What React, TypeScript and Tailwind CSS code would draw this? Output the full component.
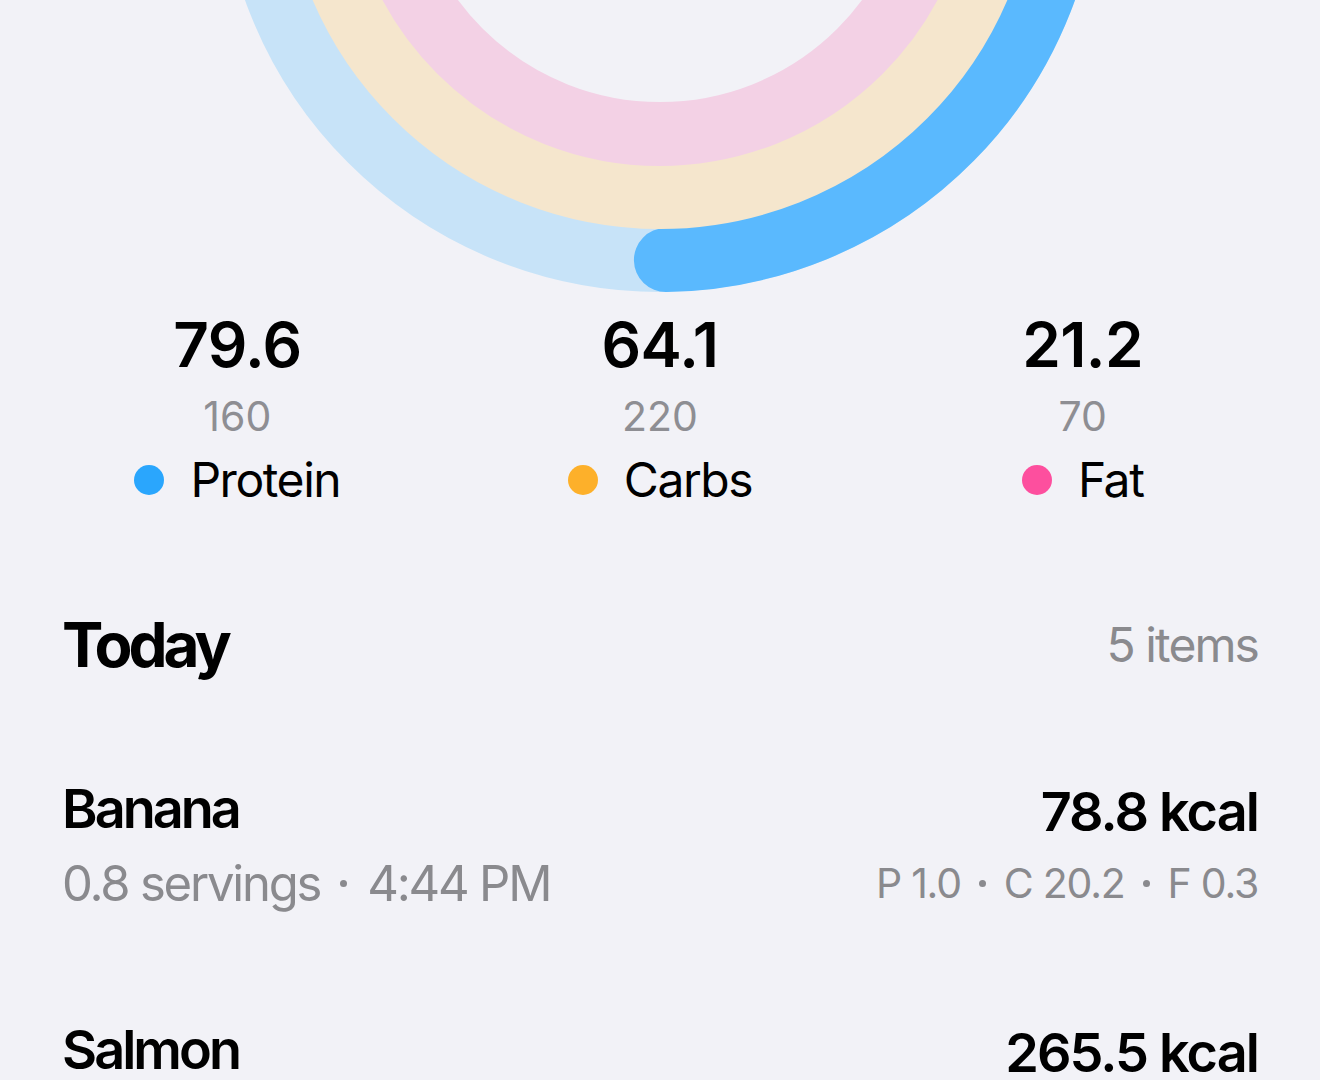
import React from "react";

const CX = 660;
const CY = -149;

const rings = [
  { r: 409, track: "#C7E3F8", fill: "#5AB9FE", value: 79.6, goal: 160 },
  { r: 346, track: "#F5E6CD", fill: "#FDB02A", value: 64.1, goal: 220 },
  { r: 283, track: "#F3D1E5", fill: "#FD4F9E", value: 21.2, goal: 70 },
];

const macros = [
  { value: "79.6", goal: "160", label: "Protein", dot: "bg-[#2AA6FD]" },
  { value: "64.1", goal: "220", label: "Carbs", dot: "bg-[#FDB02A]" },
  { value: "21.2", goal: "70", label: "Fat", dot: "bg-[#FD4F9E]" },
];

const foods = [
  { name: "Banana", meta: ["0.8 servings", "4:44 PM"], kcal: "78.8 kcal", macros: ["P 1.0", "C 20.2", "F 0.3"] },
  { name: "Salmon", meta: ["1 serving", "12:30 PM"], kcal: "265.5 kcal", macros: ["P 25.4", "C 0.0", "F 17.2"] },
];

const Rings = () => {
  return (
    <svg width="1320" height="300" viewBox="0 0 1320 300" className="block">
      {rings.map((ring) => {
        const c = 2 * Math.PI * ring.r;
        const frac = Math.min(ring.value / ring.goal, 1);
        return (
          <g key={ring.r}>
            <circle cx={CX} cy={CY} r={ring.r} fill="none" stroke={ring.track} strokeWidth={64} />
            <circle
              cx={CX}
              cy={CY}
              r={ring.r}
              fill="none"
              stroke={ring.fill}
              strokeWidth={64}
              strokeLinecap="round"
              strokeDasharray={`${frac * c} ${c}`}
              transform={`rotate(-90 ${CX} ${CY})`}
            />
          </g>
        );
      })}
    </svg>
  );
};

// parts joined by a small middle dot, like "a • b • c"
const Joined = ({ parts, gap }: { parts: string[]; gap: string }) => {
  return (
    <span className="inline-flex items-center">
      {parts.map((p, i) => (
        <React.Fragment key={p}>
          {i > 0 && <span className={`inline-block w-[7px] h-[7px] rounded-full bg-current ${gap}`} />}
          <span>{p}</span>
        </React.Fragment>
      ))}
    </span>
  );
};

export default function App() {
  return (
    <div className="min-h-screen w-[1320px] bg-[#F2F2F7] overflow-hidden font-['Inter',sans-serif] text-black">
      <Rings />

      {/* Macro totals */}
      <div className="grid grid-cols-3 mx-[26px] mt-[14px]">
        {macros.map((m) => (
          <div key={m.label} className="flex flex-col items-center">
            <div className="text-[62px] leading-none font-semibold tracking-[-0.01em]">{m.value}</div>
            <div className="text-[41px] leading-none text-[#8E8E93] mt-[20px]">{m.goal}</div>
            <div className="flex items-center gap-[26px] mt-[19px]">
              <span className={`w-[30px] h-[30px] rounded-full ${m.dot}`} />
              <span className="text-[48px] leading-none tracking-[-0.03em]">{m.label}</span>
            </div>
          </div>
        ))}
      </div>

      {/* Today header */}
      <div className="flex items-center justify-between px-[62px] mt-[110px]">
        <h2 className="text-[62px] leading-none font-bold tracking-[-0.065em]">Today</h2>
        <span className="text-[48px] leading-none text-[#8A8A8E] tracking-[-0.04em]">5 items</span>
      </div>

      {/* Food list */}
      <div className="flex flex-col px-[62px] mt-[106px] gap-[115px]">
        {foods.map((f) => (
          <div key={f.name} className="flex justify-between">
            <div className="flex flex-col items-start">
              <span className="text-[54px] leading-none font-semibold tracking-[-0.055em]">{f.name}</span>
              <span className="text-[49px] leading-none text-[#8A8A8E] mt-[23px] tracking-[-0.045em]">
                <Joined parts={f.meta} gap="mx-[20px]" />
              </span>
            </div>
            <div className="flex flex-col items-end">
              <span className="text-[54px] leading-none font-semibold mt-[3px] tracking-[-0.035em]">{f.kcal}</span>
              <span className="text-[41px] leading-none text-[#8A8A8E] mt-[24px] tracking-[-0.03em]">
                <Joined parts={f.macros} gap="mx-[18px]" />
              </span>
            </div>
          </div>
        ))}
      </div>
    </div>
  );
}
